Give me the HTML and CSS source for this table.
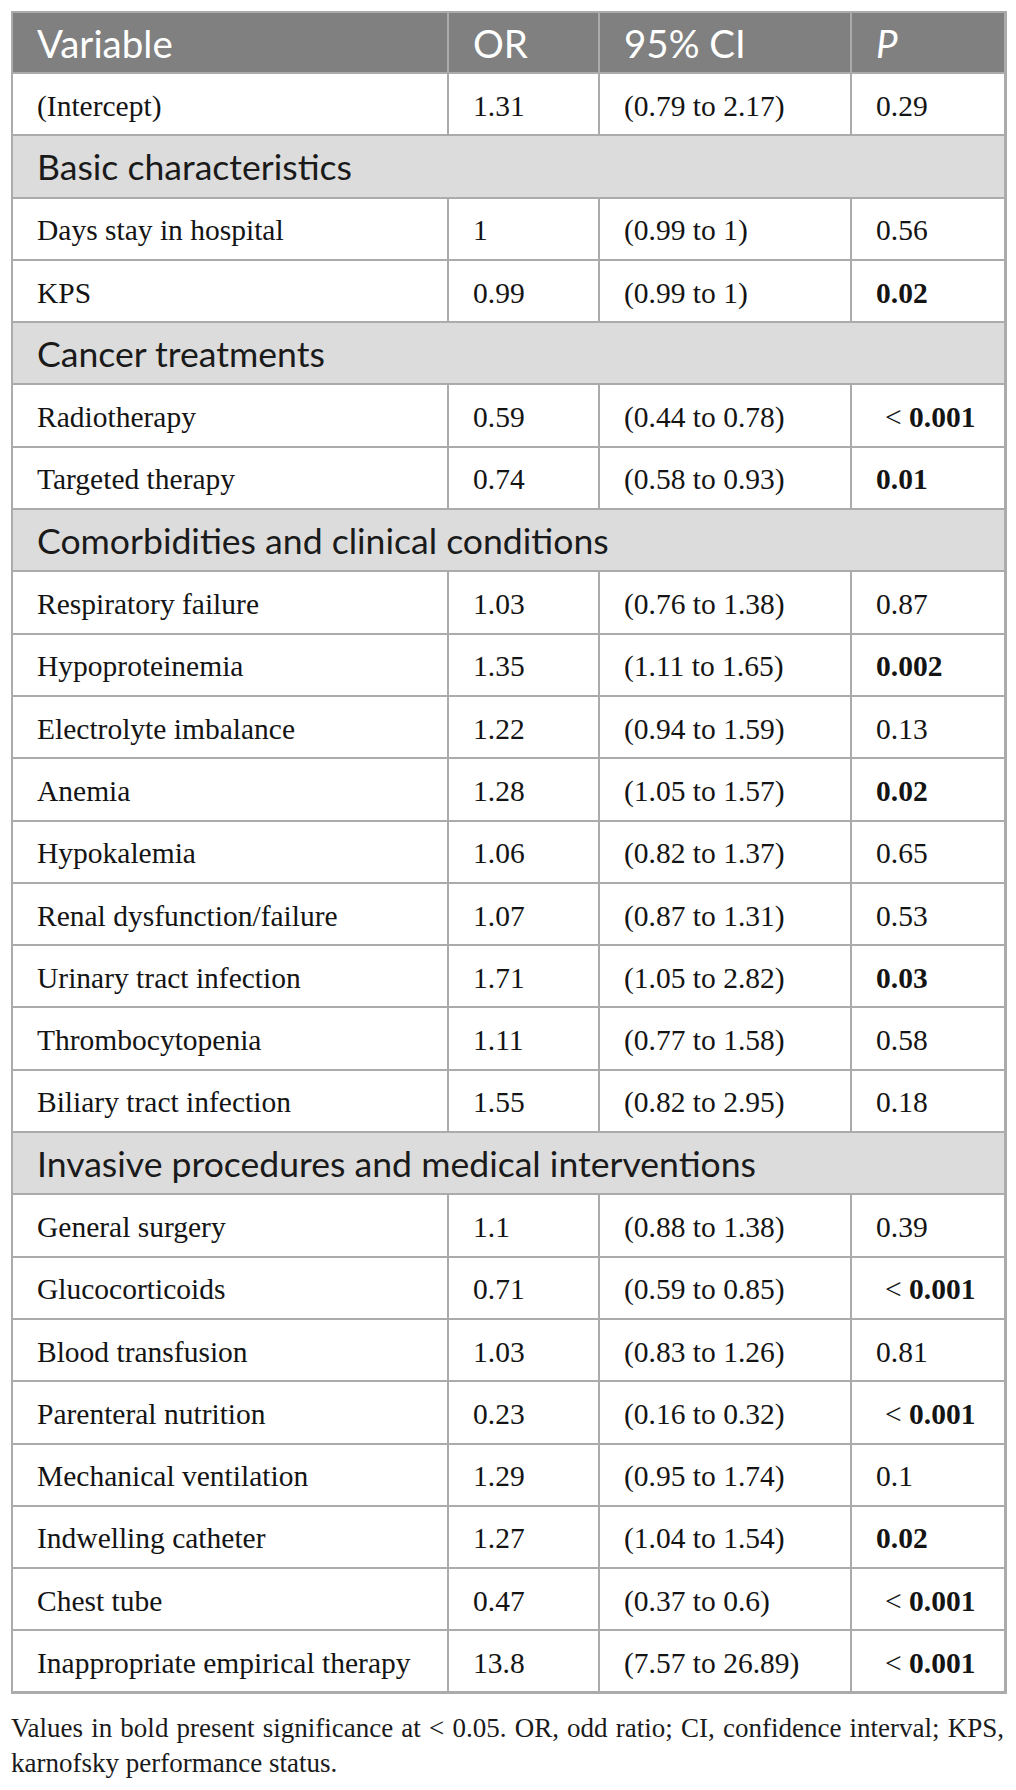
FILE: index.html
```html
<!DOCTYPE html>
<html>
<head>
<meta charset="utf-8">
<link rel="stylesheet" href="styles.css">
</head>
<body>
<div class="wrap">
<table class="tbl">
  <colgroup>
    <col class="c1"><col class="c2"><col class="c3"><col class="c4">
  </colgroup>
  <thead>
    <tr class="head"><th>Variable</th><th>OR</th><th>95% CI</th><th><i>P</i></th></tr>
  </thead>
  <tbody>
    <tr><td>(Intercept)</td><td>1.31</td><td>(0.79 to 2.17)</td><td>0.29</td></tr>
    <tr class="sec"><td colspan="4">Basic characteristics</td></tr>
    <tr><td>Days stay in hospital</td><td>1</td><td>(0.99 to 1)</td><td>0.56</td></tr>
    <tr><td>KPS</td><td>0.99</td><td>(0.99 to 1)</td><td><b>0.02</b></td></tr>
    <tr class="sec"><td colspan="4">Cancer treatments</td></tr>
    <tr><td>Radiotherapy</td><td>0.59</td><td>(0.44 to 0.78)</td><td><span class="lt">&lt;</span> <b>0.001</b></td></tr>
    <tr><td>Targeted therapy</td><td>0.74</td><td>(0.58 to 0.93)</td><td><b>0.01</b></td></tr>
    <tr class="sec"><td colspan="4">Comorbidities and clinical conditions</td></tr>
    <tr><td>Respiratory failure</td><td>1.03</td><td>(0.76 to 1.38)</td><td>0.87</td></tr>
    <tr><td>Hypoproteinemia</td><td>1.35</td><td>(1.11 to 1.65)</td><td><b>0.002</b></td></tr>
    <tr><td>Electrolyte imbalance</td><td>1.22</td><td>(0.94 to 1.59)</td><td>0.13</td></tr>
    <tr><td>Anemia</td><td>1.28</td><td>(1.05 to 1.57)</td><td><b>0.02</b></td></tr>
    <tr><td>Hypokalemia</td><td>1.06</td><td>(0.82 to 1.37)</td><td>0.65</td></tr>
    <tr><td>Renal dysfunction/failure</td><td>1.07</td><td>(0.87 to 1.31)</td><td>0.53</td></tr>
    <tr><td>Urinary tract infection</td><td>1.71</td><td>(1.05 to 2.82)</td><td><b>0.03</b></td></tr>
    <tr><td>Thrombocytopenia</td><td>1.11</td><td>(0.77 to 1.58)</td><td>0.58</td></tr>
    <tr><td>Biliary tract infection</td><td>1.55</td><td>(0.82 to 2.95)</td><td>0.18</td></tr>
    <tr class="sec"><td colspan="4">Invasive procedures and medical interventions</td></tr>
    <tr><td>General surgery</td><td>1.1</td><td>(0.88 to 1.38)</td><td>0.39</td></tr>
    <tr><td>Glucocorticoids</td><td>0.71</td><td>(0.59 to 0.85)</td><td><span class="lt">&lt;</span> <b>0.001</b></td></tr>
    <tr><td>Blood transfusion</td><td>1.03</td><td>(0.83 to 1.26)</td><td>0.81</td></tr>
    <tr><td>Parenteral nutrition</td><td>0.23</td><td>(0.16 to 0.32)</td><td><span class="lt">&lt;</span> <b>0.001</b></td></tr>
    <tr><td>Mechanical ventilation</td><td>1.29</td><td>(0.95 to 1.74)</td><td>0.1</td></tr>
    <tr><td>Indwelling catheter</td><td>1.27</td><td>(1.04 to 1.54)</td><td><b>0.02</b></td></tr>
    <tr><td>Chest tube</td><td>0.47</td><td>(0.37 to 0.6)</td><td><span class="lt">&lt;</span> <b>0.001</b></td></tr>
    <tr><td>Inappropriate empirical therapy</td><td>13.8</td><td>(7.57 to 26.89)</td><td><span class="lt">&lt;</span> <b>0.001</b></td></tr>
  </tbody>
</table>
<p class="note">Values in bold present significance at &lt; 0.05. OR, odd ratio; CI, confidence interval; KPS, karnofsky performance status.</p>
</div>
</body>
</html>
```
FILE: styles.css
```css
html, body {
  margin: 0;
  padding: 0;
  background: #ffffff;
}
.wrap {
  padding: 11px 0 0 11px;
  width: 993px;
}
.tbl {
  border-collapse: collapse;
  table-layout: fixed;
  width: 993px;
  border-top: 2px solid #ababab;
  border-left: 2px solid #ababab;
  border-right: 3px solid #ababab;
  border-bottom: 3px solid #ababab;
  font-family: "Liberation Serif", "Times New Roman", serif;
  font-size: 29.5px;
  color: #141414;
}
.c1 { width: 436px; }
.c2 { width: 151px; }
.c3 { width: 252px; }
.c4 { width: 154px; }
.tbl th, .tbl td {
  border: 2px solid #ababab;
  padding: 0 0 0 24px;
  height: 62.3px;
  box-sizing: border-box;
  text-align: left;
  vertical-align: middle;
  white-space: nowrap;
}
.tbl td {
  padding-top: 4px;
}
.head th {
  background: #808080;
  color: #ffffff;
  font-family: "Lato", "Open Sans", sans-serif;
  font-weight: normal;
  font-size: 38.5px;
  height: 61px;
}
.head th i {
  font-style: italic;
}
.tbl .sec td {
  background: #dcdcdc;
  font-family: "Lato", "Open Sans", sans-serif;
  font-size: 35.6px;
  color: #1a1a1a;
  padding-top: 0;
}
.lt {
  margin-left: 9px;
}
.note {
  margin: 17px 0 0 0;
  font-family: "Liberation Serif", "Times New Roman", serif;
  font-size: 27px;
  line-height: 35px;
  color: #1a1a1a;
  text-align: justify;
  width: 993px;
}
```
